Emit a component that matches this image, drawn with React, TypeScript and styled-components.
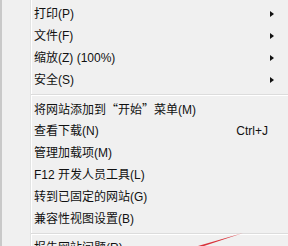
import styled, { createGlobalStyle } from 'styled-components';

const Global = createGlobalStyle`
    html, body {
        margin: 0;
        padding: 0;
        background: #f0f0f0;
    }
`;

const Menu = styled.div`
    position: relative;
    width: 288px;
    height: 246px;
    overflow: hidden;
    box-sizing: border-box;
    padding-top: 3px;
    border-left: 2px solid #c9c9c9;
    background:
        linear-gradient(to right, transparent 28px, #e2e3e3 28px, #e2e3e3 29px, #ffffff 29px, #ffffff 30px, transparent 30px),
        #f0f0f0;
    font-family: "Liberation Sans", "Noto Sans CJK SC", sans-serif;
    font-size: 12px;
    color: #111;
`;

const Item = styled.div`
    display: grid;
    grid-template-columns: 32px 1fr auto 18px;
    align-items: center;
    height: 22px;
    line-height: 22px;
`;

const Label = styled.span`
    grid-column: 2;
    white-space: nowrap;
`;

const Quote = styled.span`
    font-family: "Noto Sans CJK SC", sans-serif;
`;

const Shortcut = styled.span`
    grid-column: 3;
    padding-right: 2px;
`;

const Arrow = styled.span`
    grid-column: 4;
    justify-self: start;
    width: 0;
    height: 0;
    border-top: 3.5px solid transparent;
    border-bottom: 3.5px solid transparent;
    border-left: 4px solid #111;
`;

const Separator = styled.div`
    height: 7px;
    display: flex;
    align-items: center;
    padding-left: 29px;
    &::before {
        content: '';
        flex: 1;
        height: 1px;
        background: #dcdcdc;
        border-bottom: 1px solid #ffffff;
    }
`;

const Pointer = styled.svg`
    position: absolute;
    left: 0;
    top: 0;
    pointer-events: none;
`;

interface ItemProps {
    label: React.ReactNode;
    shortcut?: string;
    sub?: boolean;
}

function MenuItem({ label, shortcut, sub }: ItemProps) {
    return (
        <Item>
            <Label>{label}</Label>
            {shortcut && <Shortcut>{shortcut}</Shortcut>}
            {sub && <Arrow />}
        </Item>
    );
}

export default function App() {
    return (
        <>
            <Global />
            <Menu>
                <MenuItem label="打印(P)" sub />
                <MenuItem label="文件(F)" sub />
                <MenuItem label="缩放(Z) (100%)" sub />
                <MenuItem label="安全(S)" sub />
                <Separator />
                <MenuItem label={<>将网站添加到<Quote>“</Quote>开始<Quote>”</Quote>菜单(M)</>} />
                <MenuItem label="查看下载(N)" shortcut="Ctrl+J" />
                <MenuItem label="管理加载项(M)" />
                <MenuItem label="F12 开发人员工具(L)" />
                <MenuItem label="转到已固定的网站(G)" />
                <MenuItem label="兼容性视图设置(B)" />
                <Separator />
                <MenuItem label="报告网站问题(R)" />
                <Pointer width="288" height="246" viewBox="0 0 288 246">
                    <polygon points="241,233 196,246 202,246" fill="#d8323a" />
                </Pointer>
            </Menu>
        </>
    );
}
